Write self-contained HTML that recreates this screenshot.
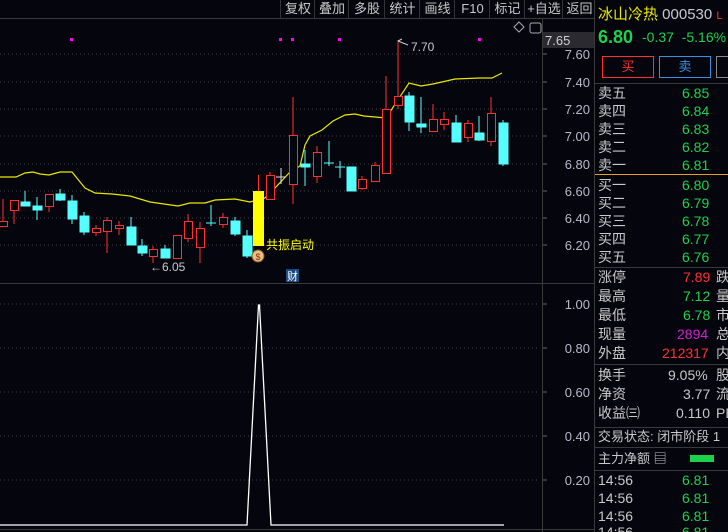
<!DOCTYPE html><html style="width:728px;height:532px;overflow:hidden"><head><meta charset="utf-8"><style>
body{margin:0;width:728px;height:532px;background:#05050d;overflow:hidden;font-family:"Liberation Sans","Noto Sans CJK SC",sans-serif;position:relative}
.a{position:absolute;white-space:nowrap}
.tb{position:absolute;top:0;height:18px;font-size:13px;color:#c8c8c8;border-left:1px solid #333;line-height:17px;text-align:center}
.r{position:absolute;left:598px;width:130px;font-size:14px;color:#c8c8c8;height:18px;line-height:18px}
.r span{position:absolute}
.g{color:#1ed14b}
.hl{position:absolute;left:595px;width:133px;height:1px;background:#3a3a3a}
</style></head><body>
<div class="tb" style="left:280px;width:34px">复权</div>
<div class="tb" style="left:314px;width:34px">叠加</div>
<div class="tb" style="left:348px;width:36px">多股</div>
<div class="tb" style="left:384px;width:35px">统计</div>
<div class="tb" style="left:419px;width:35px">画线</div>
<div class="tb" style="left:454px;width:35px">F10</div>
<div class="tb" style="left:489px;width:35px">标记</div>
<div class="tb" style="left:524px;width:38px">+自选</div>
<div class="tb" style="left:562px;width:33px">返回</div>
<svg class="a" style="left:0;top:0" width="595" height="532">
<line x1="0" y1="18.5" x2="595" y2="18.5" stroke="#3a3a3a"/>
<line x1="542.5" y1="18" x2="542.5" y2="532" stroke="#3a3a3a"/>
<line x1="0" y1="283.5" x2="595" y2="283.5" stroke="#3a3a3a"/>
<line x1="0" y1="529.5" x2="595" y2="529.5" stroke="#3a3a3a"/>
<g stroke="#444" stroke-dasharray="1 3">
<line x1="0" y1="54" x2="540" y2="54"/><line x1="0" y1="82" x2="540" y2="82"/><line x1="0" y1="109" x2="540" y2="109"/><line x1="0" y1="136" x2="540" y2="136"/><line x1="0" y1="164" x2="540" y2="164"/><line x1="0" y1="191" x2="540" y2="191"/><line x1="0" y1="218" x2="540" y2="218"/><line x1="0" y1="245" x2="540" y2="245"/>
<line x1="0" y1="304" x2="540" y2="304"/><line x1="0" y1="348" x2="540" y2="348"/><line x1="0" y1="392" x2="540" y2="392"/><line x1="0" y1="436" x2="540" y2="436"/><line x1="0" y1="480" x2="540" y2="480"/>
</g>
<g stroke="#666"><line x1="543" y1="54" x2="547" y2="54"/><line x1="543" y1="82" x2="547" y2="82"/><line x1="543" y1="109" x2="547" y2="109"/><line x1="543" y1="136" x2="547" y2="136"/><line x1="543" y1="164" x2="547" y2="164"/><line x1="543" y1="191" x2="547" y2="191"/><line x1="543" y1="218" x2="547" y2="218"/><line x1="543" y1="245" x2="547" y2="245"/>
<line x1="543" y1="304" x2="547" y2="304"/><line x1="543" y1="348" x2="547" y2="348"/><line x1="543" y1="392" x2="547" y2="392"/><line x1="543" y1="436" x2="547" y2="436"/><line x1="543" y1="480" x2="547" y2="480"/></g>
<g font-size="13" fill="#b8b8c8" text-anchor="end">
<text x="590" y="59">7.60</text><text x="590" y="87">7.40</text><text x="590" y="114">7.20</text><text x="590" y="141">7.00</text><text x="590" y="169">6.80</text><text x="590" y="196">6.60</text><text x="590" y="223">6.40</text><text x="590" y="250">6.20</text>
<text x="590" y="309">1.00</text><text x="590" y="353">0.80</text><text x="590" y="397">0.60</text><text x="590" y="441">0.40</text><text x="590" y="485">0.20</text>
</g>
<rect x="543" y="32" width="52" height="16" fill="#2a2a30"/>
<text x="545" y="45" font-size="13" fill="#d0d0d0">7.65</text>
<path d="M519 22l5 5-5 5-5-5z" fill="none" stroke="#aaa"/>
<rect x="530" y="23" width="11" height="10" rx="2" fill="none" stroke="#aaa"/>
<g fill="#ff00ff"><rect x="70" y="38" width="3" height="3"/><rect x="279" y="38" width="3" height="3"/><rect x="291" y="38" width="3" height="3"/><rect x="338" y="38" width="3" height="3"/><rect x="478" y="38" width="3" height="3"/></g>
<polyline fill="none" stroke="#e8e800" stroke-width="1.2" points="0,177 16,177 25,173 33,172 40,174 49,175 60,172 72,172 85,188 95,193 112,194 130,196 150,202 178,206 190,203 205,203 215,200 235,199 250,202 265,198 275,188 290,172 300,166 305,145 310,136 322,130 333,121 345,115 355,114 364,116 386,118 409,83 421,86 433,84 455,79 480,78 492,78 502,73"/>
<g stroke="#ff3030" fill="none" stroke-width="1">
<path d="M3 199V226M14 200V224M49 194V212M96 225V236M107 217V253M119 221V235M153 246V263M177 235V258M188 214V242M200 222V263M223 213V228M270 172V199M293 97V204M317 146V183M362 176V190M375 162V181M386 76V174M398 40V109M433 104V132M444 112V130M468 120V142M491 97V146"/>
<rect x="-1.5" y="221.5" width="9" height="5" fill="#05050d"/><rect x="10.5" y="200.5" width="8" height="10" fill="#05050d"/><rect x="45.5" y="194.5" width="8" height="12" fill="#05050d"/><rect x="92.5" y="228.5" width="8" height="4" fill="#05050d"/><rect x="103.5" y="220.5" width="8" height="11" fill="#05050d"/><rect x="115.5" y="225.5" width="8" height="3" fill="#05050d"/><rect x="149.5" y="249.5" width="8" height="7" fill="#05050d"/><rect x="173.5" y="235.5" width="8" height="23" fill="#05050d"/><rect x="184.5" y="221.5" width="8" height="17" fill="#05050d"/><rect x="196.5" y="228.5" width="8" height="19" fill="#05050d"/><rect x="219.5" y="217.5" width="8" height="7" fill="#05050d"/><rect x="266.5" y="175.5" width="8" height="24" fill="#05050d"/><rect x="289.5" y="135.5" width="8" height="49" fill="#05050d"/><rect x="313.5" y="152.5" width="8" height="24" fill="#05050d"/><rect x="358.5" y="179.5" width="8" height="9" fill="#05050d"/><rect x="371.5" y="165.5" width="8" height="16" fill="#05050d"/><rect x="382.5" y="109.5" width="8" height="64" fill="#05050d"/><rect x="394.5" y="96.5" width="8" height="9" fill="#05050d"/><rect x="429.5" y="119.5" width="8" height="12" fill="#05050d"/><rect x="440.5" y="119.5" width="8" height="5" fill="#05050d"/><rect x="464.5" y="123.5" width="8" height="14" fill="#05050d"/><rect x="487.5" y="113.5" width="8" height="28" fill="#05050d"/>
</g>
<g stroke="#55ffff" fill="#55ffff">
<path d="M25 191V206M37 197V220M60 189V201M72 195V224M84 212V235M131 217V245M142 239V256M165 245V258M211 205V226M235 217V236M247 230V258M305 150V186M329 141V166M340 161V178M409 92V131M421 97V133M456 115V142M479 116V141M503 120V166M206 223H216M324 163H334M335 167H345M416 125H426"/>
<rect x="21" y="202" width="9" height="4"/><rect x="33" y="206" width="9" height="4"/><rect x="56" y="194" width="9" height="6"/><rect x="68" y="201" width="9" height="18"/><rect x="80" y="216" width="9" height="16"/><rect x="127" y="227" width="9" height="18"/><rect x="138" y="246" width="9" height="7"/><rect x="161" y="249" width="9" height="9"/><rect x="231" y="221" width="9" height="13"/><rect x="243" y="236" width="9" height="20"/><rect x="301" y="164" width="9" height="3"/><rect x="347" y="167" width="9" height="24"/><rect x="405" y="96" width="9" height="26"/><rect x="417" y="124" width="9" height="3"/><rect x="452" y="123" width="9" height="19"/><rect x="475" y="133" width="9" height="7"/><rect x="499" y="123" width="9" height="41"/>
</g>
<path d="M281 168V184M276 177H286" stroke="#ddd"/>
<rect x="253" y="191" width="11" height="55" fill="#ffff00"/><line x1="258.5" y1="175" x2="258.5" y2="191" stroke="#ff3030"/>
<circle cx="258" cy="256" r="6" fill="#e8c080" stroke="#8a5a20"/><text x="258" y="260" font-size="9" fill="#8a3010" text-anchor="middle">$</text>
<text x="266" y="249" font-size="12" fill="#ffff00">共振启动</text>
<text x="150" y="271" font-size="12" fill="#c8c8d0">←6.05</text>
<path d="M398 41l4 -2M398 41l10 4" stroke="#ccc" fill="none"/>
<text x="411" y="51" font-size="12" fill="#c8c8d0">7.70</text>
<rect x="286" y="269" width="13" height="13" fill="#1a4a80"/><text x="287" y="280" font-size="11" fill="#fff">财</text>
<polyline fill="none" stroke="#fff" stroke-width="1.3" points="0,525 247,525 258.5,305 259.5,305 271,525 504,525"/>
</svg>
<div class="a" style="left:594px;top:0;width:1px;height:532px;background:#3a3a3a"></div>
<div class="a" style="left:598px;top:3px;font-size:15px;color:#e8e800">冰山冷热 <span style="color:#c8c8d0">000530</span> <span style="color:#ff3030;font-size:11px">L</span></div>
<div class="a g" style="left:598px;top:27px;font-size:18px;font-weight:bold">6.80</div>
<div class="a g" style="left:642px;top:29px;font-size:14px">-0.37 &nbsp;-5.16%</div>
<div class="a" style="left:602px;top:56px;width:50px;height:20px;border:1px solid #ff3030;color:#ff3030;text-align:center;line-height:20px;font-size:13px">买</div>
<div class="a" style="left:659px;top:56px;width:50px;height:20px;border:1px solid #3a90e0;color:#3a90e0;text-align:center;line-height:20px;font-size:13px">卖</div>
<div class="a" style="left:716px;top:56px;width:20px;height:20px;border:1px solid #888"></div>
<div class="hl" style="top:83px"></div>
<div class="r" style="top:84px"><span>卖五</span><span class="g" style="left:84px">6.85</span></div>
<div class="r" style="top:102px"><span>卖四</span><span class="g" style="left:84px">6.84</span></div>
<div class="r" style="top:120px"><span>卖三</span><span class="g" style="left:84px">6.83</span></div>
<div class="r" style="top:138px"><span>卖二</span><span class="g" style="left:84px">6.82</span></div>
<div class="r" style="top:156px"><span>卖一</span><span class="g" style="left:84px">6.81</span></div>
<div class="a" style="left:595px;top:174px;width:133px;height:1px;background:#e8a020"></div>
<div class="r" style="top:176px"><span>买一</span><span class="g" style="left:84px">6.80</span></div>
<div class="r" style="top:194px"><span>买二</span><span class="g" style="left:84px">6.79</span></div>
<div class="r" style="top:212px"><span>买三</span><span class="g" style="left:84px">6.78</span></div>
<div class="r" style="top:230px"><span>买四</span><span class="g" style="left:84px">6.77</span></div>
<div class="r" style="top:248px"><span>买五</span><span class="g" style="left:84px">6.76</span></div>
<div class="hl" style="top:267px"></div>
<div class="r" style="top:268px"><span>涨停</span><span style="left:85px;color:#ff3030">7.89</span><span style="left:118px">跌</span></div>
<div class="r" style="top:287px"><span>最高</span><span class="g" style="left:85px">7.12</span><span style="left:118px">量</span></div>
<div class="r" style="top:306px"><span>最低</span><span class="g" style="left:85px">6.78</span><span style="left:118px">市</span></div>
<div class="r" style="top:325px"><span>现量</span><span style="left:79px;color:#d020d0">2894</span><span style="left:118px">总</span></div>
<div class="r" style="top:344px"><span>外盘</span><span style="left:64px;color:#ff3030">212317</span><span style="left:118px">内</span></div>
<div class="hl" style="top:364px"></div>
<div class="r" style="top:366px"><span>换手</span><span style="left:70px">9.05%</span><span style="left:118px">股</span></div>
<div class="r" style="top:385px"><span>净资</span><span style="left:85px">3.77</span><span style="left:118px">流</span></div>
<div class="r" style="top:404px"><span>收益㈢</span><span style="left:78px">0.110</span><span style="left:118px">PE</span></div>
<div class="hl" style="top:427px"></div>
<div class="r" style="top:428px;font-size:13px"><span>交易状态: 闭市阶段 1</span></div>
<div class="hl" style="top:447px"></div>
<div class="r" style="top:450px;font-size:13px"><span>主力净额 ▤</span><span style="left:92px;top:5px;width:24px;height:7px;background:#1ed14b"></span></div>
<div class="hl" style="top:470px"></div>
<div class="r" style="top:471px"><span>14:56</span><span class="g" style="left:84px">6.81</span></div>
<div class="r" style="top:489px"><span>14:56</span><span class="g" style="left:84px">6.81</span></div>
<div class="r" style="top:507px"><span>14:56</span><span class="g" style="left:84px">6.81</span></div>
<div class="r" style="top:523px;height:9px;overflow:hidden"><span>14:56</span><span class="g" style="left:84px">6.81</span></div>
</body></html>
